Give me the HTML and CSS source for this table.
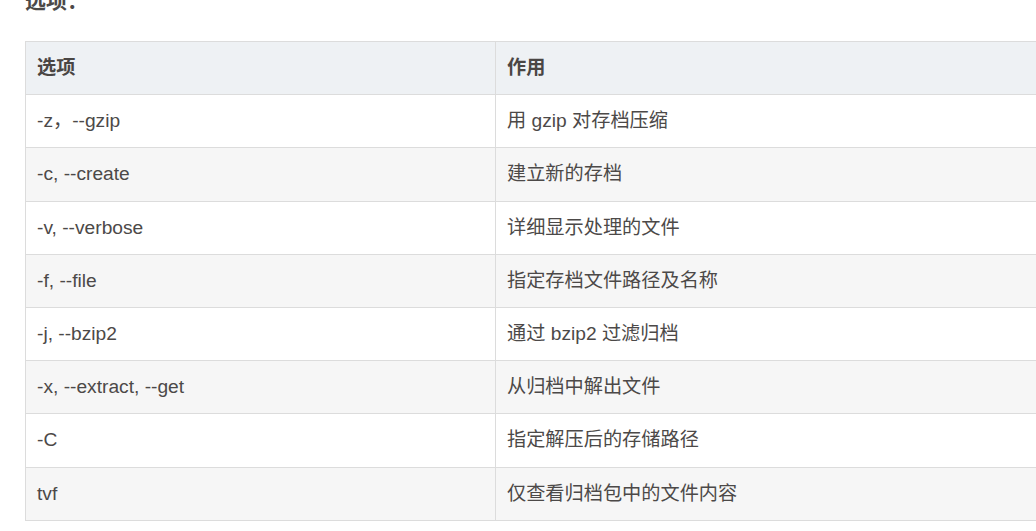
FILE: index.html
```html
<!DOCTYPE html>
<html lang="zh-CN">
<head>
<meta charset="utf-8">
<title>选项</title>
<link rel="stylesheet" href="styles.css">
</head>
<body>
<div class="page">
  <h4 class="title">选项：</h4>
  <table class="opts">
    <thead>
      <tr><th class="c1">选项</th><th>作用</th></tr>
    </thead>
    <tbody>
      <tr><td>-z，--gzip</td><td>用 gzip 对存档压缩</td></tr>
      <tr><td>-c, --create</td><td>建立新的存档</td></tr>
      <tr><td>-v, --verbose</td><td>详细显示处理的文件</td></tr>
      <tr><td>-f, --file</td><td>指定存档文件路径及名称</td></tr>
      <tr><td>-j, --bzip2</td><td>通过 bzip2 过滤归档</td></tr>
      <tr><td>-x, --extract, --get</td><td>从归档中解出文件</td></tr>
      <tr><td>-C</td><td>指定解压后的存储路径</td></tr>
      <tr><td>tvf</td><td>仅查看归档包中的文件内容</td></tr>
    </tbody>
  </table>
</div>
</body>
</html>
```
FILE: styles.css
```css
html, body {
  margin: 0;
  padding: 0;
  overflow: hidden;
  background: #ffffff;
}
.page {
  padding-left: 25px;
  font-family: "Liberation Sans", "Noto Sans CJK SC", sans-serif;
  color: #4c4948;
}
.title {
  margin: -14px 0 0 0;
  height: 55px;
  font-size: 21px;
  line-height: 30px;
  font-weight: bold;
  color: #4c4948;
}
.opts {
  border-collapse: collapse;
  width: 1200px;
  font-size: 19.2px;
  table-layout: fixed;
}
.opts th, .opts td {
  border: 1px solid #dcdcdc;
  padding: 12px 11px;
  line-height: 28.2px;
  text-align: left;
  white-space: nowrap;
}
.opts th {
  background: #eef1f4;
  font-weight: bold;
  color: #4a4644;
}
.opts .c1 {
  width: 447px;
}
.opts tbody tr:nth-child(even) td {
  background: #f6f6f6;
}
.opts tbody tr:nth-child(odd) td {
  background: #ffffff;
}
```
